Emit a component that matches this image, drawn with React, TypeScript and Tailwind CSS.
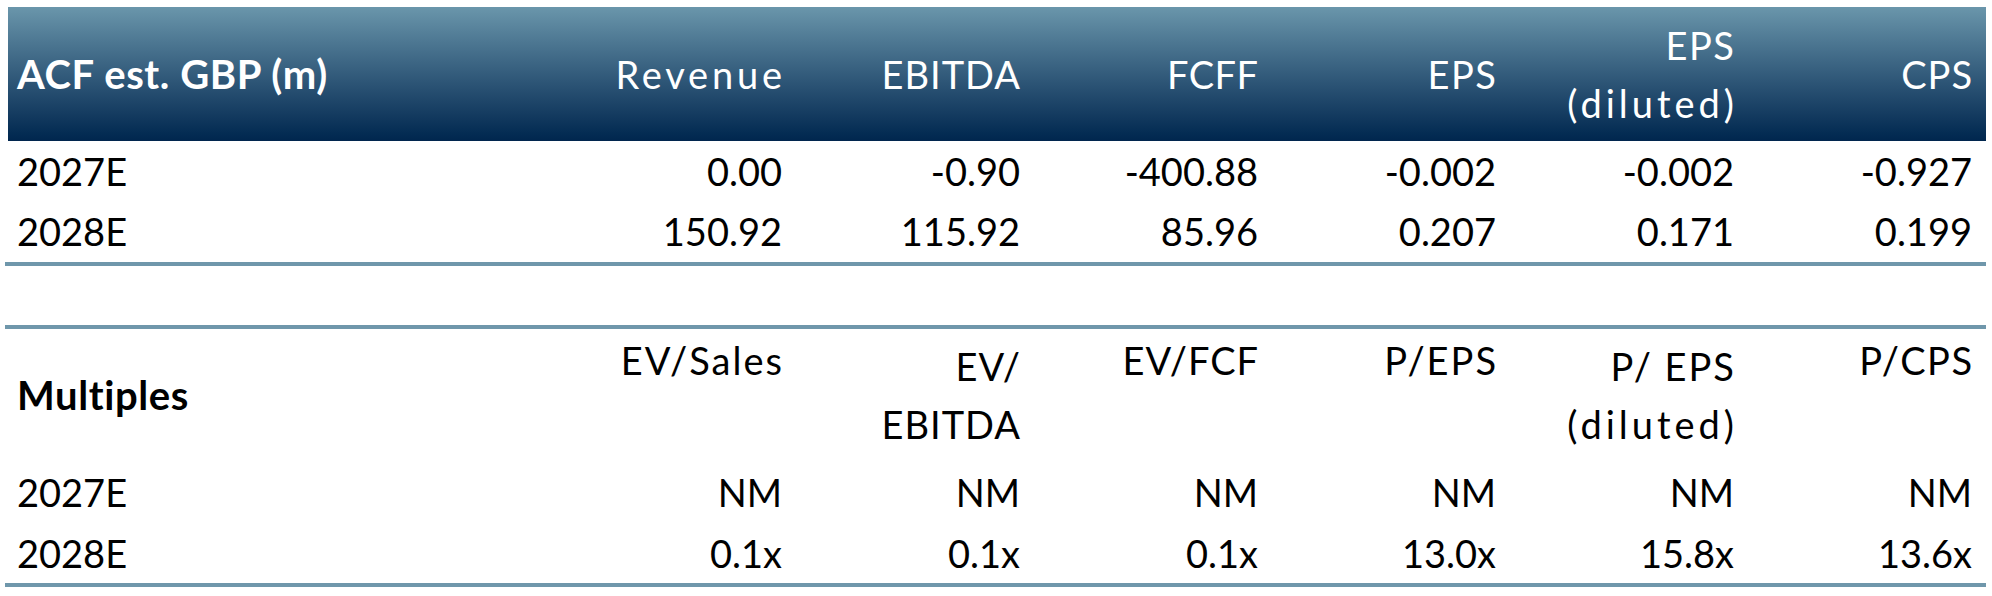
type HeadLine = { text: string; cls: string };

const estimates = {
  title: "ACF est. GBP (m)",
  headers: [
    [{ text: "Revenue", cls: "tracking-[3.8px] -mr-[3.8px]" }],
    [{ text: "EBITDA", cls: "tracking-[1px] -mr-[1px]" }],
    [{ text: "FCFF", cls: "tracking-[0.5px] -mr-[0.5px]" }],
    [{ text: "EPS", cls: "tracking-[1.5px] -mr-[1.5px]" }],
    [
      { text: "EPS", cls: "tracking-[1.5px] -mr-[1.5px]" },
      { text: "(diluted)", cls: "tracking-[4px] -mr-[4px]" },
    ],
    [{ text: "CPS", cls: "tracking-[1px] -mr-[1px]" }],
  ] as HeadLine[][],
  rows: [
    ["2027E", "0.00", "-0.90", "-400.88", "-0.002", "-0.002", "-0.927"],
    ["2028E", "150.92", "115.92", "85.96", "0.207", "0.171", "0.199"],
  ],
};

const multiples = {
  title: "Multiples",
  headers: [
    [{ text: "EV/Sales", cls: "tracking-[2px] -mr-[2px]" }],
    [
      { text: "EV/", cls: "tracking-[1px] -mr-[1px]" },
      { text: "EBITDA", cls: "tracking-[1px] -mr-[1px]" },
    ],
    [{ text: "EV/FCF", cls: "tracking-[1px] -mr-[1px]" }],
    [{ text: "P/EPS", cls: "tracking-[2px] -mr-[2px]" }],
    [
      { text: "P/ EPS", cls: "tracking-[2px] -mr-[2px]" },
      { text: "(diluted)", cls: "tracking-[4px] -mr-[4px]" },
    ],
    [{ text: "P/CPS", cls: "tracking-[1.5px] -mr-[1.5px]" }],
  ] as HeadLine[][],
  rows: [
    ["2027E", "NM", "NM", "NM", "NM", "NM", "NM"],
    ["2028E", "0.1x", "0.1x", "0.1x", "13.0x", "15.8x", "13.6x"],
  ],
};

const cols = "grid grid-cols-[550px_repeat(6,238px)]";

function Rule() {
  return <div className="-ml-[3px] h-[4px] w-[1981px] bg-[#6f97ab]" />;
}

function DataRow({ cells, height }: { cells: string[]; height: string }) {
  return (
    <div className={`${cols} ${height} items-center`}>
      <div className="pl-[9px]">{cells[0]}</div>
      {cells.slice(1).map((c, i) => (
        <div key={i} className="pr-[14px] text-right">
          {c}
        </div>
      ))}
    </div>
  );
}

function HeadCell({ lines, align }: { lines: HeadLine[]; align: string }) {
  return (
    <div className={`flex flex-col items-end pr-[14px] leading-[58px] ${align}`}>
      {lines.map((l) => (
        <span key={l.text} className={l.cls}>
          {l.text}
        </span>
      ))}
    </div>
  );
}

export default function App() {
  return (
    <div className="h-[596px] w-[1992px] bg-white pl-[8px] pt-[7px] font-['Lato',sans-serif] text-[38px] leading-none text-black">
      <div className="w-[1978px]">
        <div className={`${cols} h-[134px] bg-linear-to-b from-[#6a96ab] to-[#00264e] text-white`}>
          <div className="flex items-center pl-[9px] text-[40px] font-bold tracking-[0.6px]">
            {estimates.title}
          </div>
          {estimates.headers.map((h, i) => (
            <HeadCell key={i} lines={h} align="justify-center" />
          ))}
        </div>
        <DataRow cells={estimates.rows[0]} height="h-[59px]" />
        <DataRow cells={estimates.rows[1]} height="h-[62px]" />
        <Rule />

        <div className="h-[59px]" />
        <Rule />
        <div className={`${cols} h-[132px]`}>
          <div className="flex items-center pl-[9px] text-[40px] font-bold tracking-[0.6px]">
            {multiples.title}
          </div>
          {multiples.headers.map((h, i) => (
            <HeadCell
              key={i}
              lines={h}
              align={h.length > 1 ? "justify-center" : "justify-start pt-[2px]"}
            />
          ))}
        </div>
        <DataRow cells={multiples.rows[0]} height="h-[62px]" />
        <DataRow cells={multiples.rows[1]} height="h-[60px]" />
        <Rule />
      </div>
    </div>
  );
}
